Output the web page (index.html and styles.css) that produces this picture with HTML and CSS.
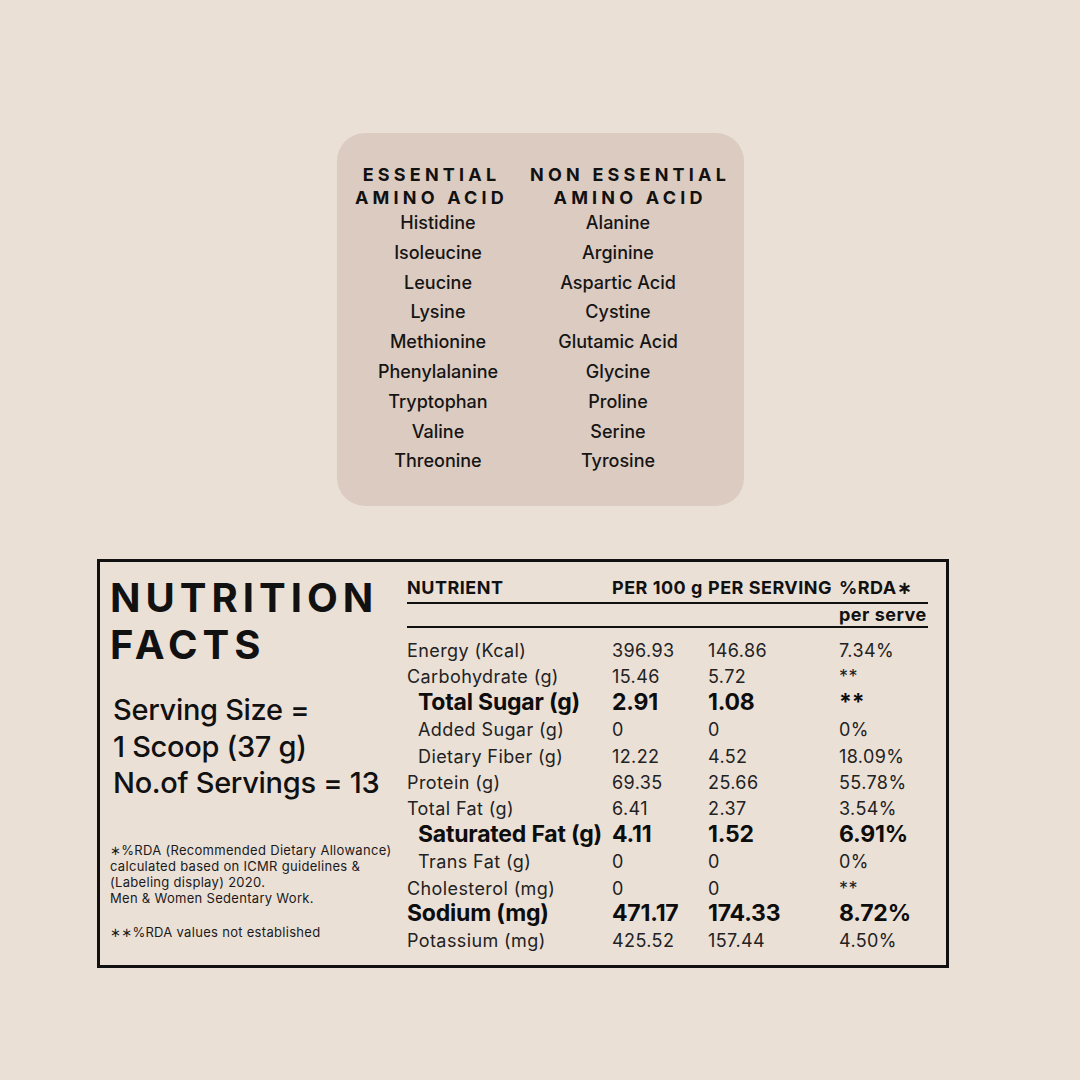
FILE: index.html
```html
<!DOCTYPE html>
<html lang="en">
<head>
<meta charset="utf-8">
<title>Nutrition Facts</title>
<link rel="stylesheet" href="styles.css">
</head>
<body>
<main class="page">
  <section class="amino-card">
    <div class="amino-heads">
      <h2 class="amino-head">ESSENTIAL<br>AMINO ACID</h2>
      <h2 class="amino-head">NON ESSENTIAL<br>AMINO ACID</h2>
    </div>
    <div class="amino-lists">
      <ul class="amino-list">
        <li>Histidine</li>
        <li>Isoleucine</li>
        <li>Leucine</li>
        <li>Lysine</li>
        <li>Methionine</li>
        <li>Phenylalanine</li>
        <li>Tryptophan</li>
        <li>Valine</li>
        <li>Threonine</li>
      </ul>
      <ul class="amino-list">
        <li>Alanine</li>
        <li>Arginine</li>
        <li>Aspartic Acid</li>
        <li>Cystine</li>
        <li>Glutamic Acid</li>
        <li>Glycine</li>
        <li>Proline</li>
        <li>Serine</li>
        <li>Tyrosine</li>
      </ul>
    </div>
  </section>

  <section class="facts">
    <div class="facts-left">
      <h1 class="facts-title">NUTRITION<br>FACTS</h1>
      <p class="serving">Serving Size =<br>1 Scoop (37 g)<br>No.of Servings = 13</p>
      <p class="note">∗%RDA (Recommended Dietary Allowance)<br>calculated based on ICMR guidelines &amp;<br>(Labeling display) 2020.<br>Men &amp; Women Sedentary Work.</p>
      <p class="note note-2">∗∗%RDA values not established</p>
    </div>
    <div class="facts-right">
      <div class="t-head">
        <span>NUTRIENT</span><span>PER 100 g</span><span>PER SERVING</span><span>%RDA∗</span>
      </div>
      <div class="t-sub">
        <span></span><span></span><span></span><span>per serve</span>
      </div>
      <div class="t-body">
        <div class="row"><span>Energy (Kcal)</span><span>396.93</span><span>146.86</span><span>7.34%</span></div>
        <div class="row"><span>Carbohydrate (g)</span><span>15.46</span><span>5.72</span><span>**</span></div>
        <div class="row bold indent"><span>Total Sugar (g)</span><span>2.91</span><span>1.08</span><span>**</span></div>
        <div class="row indent"><span>Added Sugar (g)</span><span>0</span><span>0</span><span>0%</span></div>
        <div class="row indent"><span>Dietary Fiber (g)</span><span>12.22</span><span>4.52</span><span>18.09%</span></div>
        <div class="row"><span>Protein (g)</span><span>69.35</span><span>25.66</span><span>55.78%</span></div>
        <div class="row"><span>Total Fat (g)</span><span>6.41</span><span>2.37</span><span>3.54%</span></div>
        <div class="row bold indent"><span>Saturated Fat (g)</span><span>4.11</span><span>1.52</span><span>6.91%</span></div>
        <div class="row indent"><span>Trans Fat (g)</span><span>0</span><span>0</span><span>0%</span></div>
        <div class="row"><span>Cholesterol (mg)</span><span>0</span><span>0</span><span>**</span></div>
        <div class="row bold"><span>Sodium (mg)</span><span>471.17</span><span>174.33</span><span>8.72%</span></div>
        <div class="row"><span>Potassium (mg)</span><span>425.52</span><span>157.44</span><span>4.50%</span></div>
      </div>
    </div>
  </section>
</main>
</body>
</html>
```

FILE: styles.css
```css
* { box-sizing: border-box; }
html, body { margin: 0; padding: 0; }
body {
  width: 1080px;
  height: 1080px;
  background: #ebe0d6;
  font-family: Inter, "Noto Sans", "Liberation Sans", "DejaVu Sans", sans-serif;
  color: #111;
  overflow: hidden;
}
.page {
  display: flex;
  flex-direction: column;
  padding-top: 133px;
}
h1, h2, p, ul { margin: 0; padding: 0; }

/* amino card */
.amino-card {
  align-self: flex-start;
  margin-left: 337px;
  width: 407px;
  height: 373px;
  background: #dccbc0;
  border-radius: 28px;
  padding-top: 31px;
}
.amino-heads {
  display: flex;
  justify-content: center;
  gap: 22px;
  padding-left: 4px;
}
.amino-head {
  font-size: 18px;
  font-weight: 700;
  line-height: 22.5px;
  letter-spacing: 4.2px;
  text-align: center;
  color: #111;
}
.amino-lists {
  display: grid;
  grid-template-columns: 180px 180px;
  padding-left: 11px;
  margin-top: -1px;
}
.amino-list {
  list-style: none;
  text-align: center;
  font-size: 18px;
  font-weight: 500;
  line-height: 29.8px;
  color: #151515;
}

/* nutrition facts */
.facts {
  align-self: flex-start;
  margin-left: 97px;
  margin-top: 53px;
  width: 852px;
  height: 409px;
  border: 3px solid #111;
  display: grid;
  grid-template-columns: 307px 1fr;
}
.facts-left {
  padding-left: 10px;
  padding-top: 13px;
}
.facts-title {
  font-size: 40px;
  font-weight: 700;
  line-height: 46.5px;
  letter-spacing: 5px;
  color: #111;
  white-space: nowrap;
}
.serving {
  margin-top: 24px;
  padding-left: 3px;
  font-size: 29px;
  font-weight: 500;
  line-height: 36.5px;
  letter-spacing: -0.3px;
  color: #111;
  white-space: nowrap;
}
.note {
  margin-top: 40px;
  font-size: 13px;
  line-height: 16px;
  letter-spacing: 0.3px;
  color: #1a1a1a;
  white-space: nowrap;
}
.note.note-2 {
  margin-top: 18px;
}
.facts-right {
  padding-top: 16px;
  padding-right: 18px;
}
.t-head, .t-sub, .row {
  display: grid;
  grid-template-columns: 205px 96px 131px 1fr;
  white-space: nowrap;
}
.t-head {
  font-size: 18px;
  font-weight: 700;
  line-height: 20px;
  letter-spacing: 0.5px;
  padding-bottom: 4px;
  border-bottom: 2px solid #111;
}
.t-sub {
  font-size: 18px;
  font-weight: 700;
  line-height: 20px;
  letter-spacing: 0.5px;
  padding-top: 1px;
  padding-bottom: 1px;
  border-bottom: 2px solid #111;
}
.t-body {
  margin-top: 10px;
}
.row {
  font-size: 18px;
  font-weight: 400;
  line-height: 26.4px;
  letter-spacing: 0.4px;
  color: #222;
}
.row.indent span:first-child {
  padding-left: 11px;
}
.row.bold {
  font-size: 23px;
  font-weight: 700;
  color: #0d0d0d;
  letter-spacing: -0.2px;
  line-height: 22.4px;
  padding-bottom: 4px;
}
```
